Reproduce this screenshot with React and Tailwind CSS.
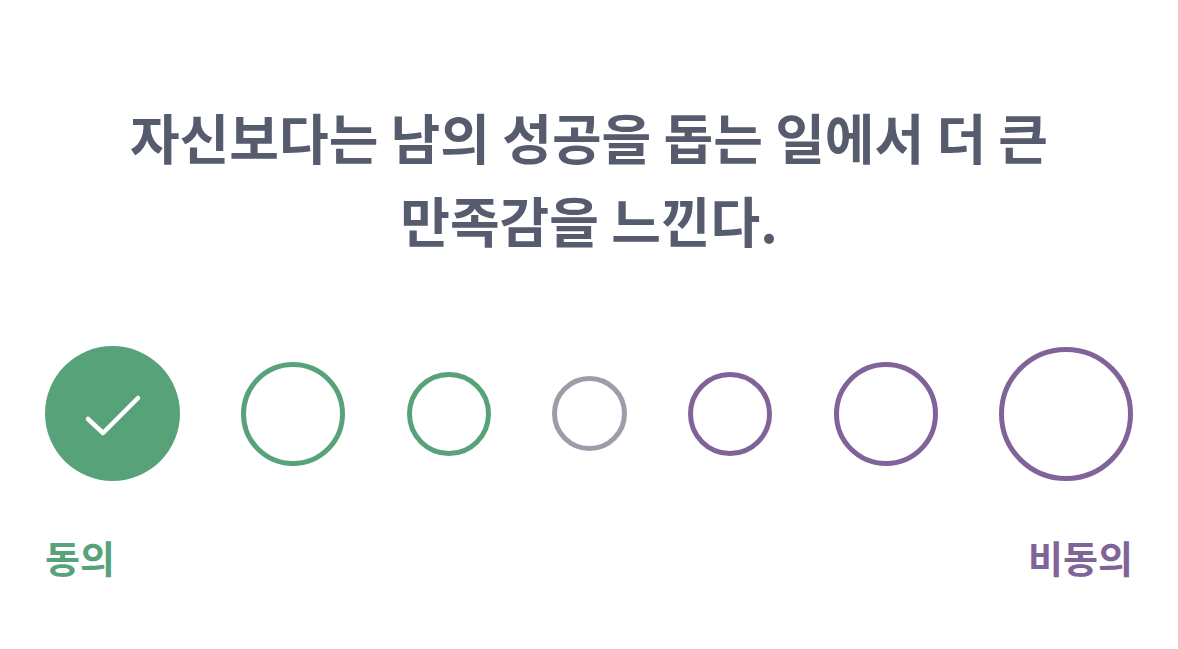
const options = [
  { size: "w-[135px] h-[135px]", cls: "bg-[#58a27a]", checked: true },
  { size: "w-[104px] h-[104px]", cls: "border-[5px] border-[#58a27a]" },
  { size: "w-[84px] h-[84px]", cls: "border-[5px] border-[#58a27a]" },
  { size: "w-[75px] h-[75px]", cls: "border-[5px] border-[#9d9ca8]" },
  { size: "w-[84px] h-[84px]", cls: "border-[5px] border-[#7f6399]" },
  { size: "w-[104px] h-[104px]", cls: "border-[5px] border-[#7f6399]" },
  { size: "w-[134px] h-[134px]", cls: "border-[5px] border-[#7f6399]" },
];

function Check() {
  return (
    <svg width="135" height="135" viewBox="0 0 135 135" fill="none">
      <path
        d="M43 73 L58 87 L93 52"
        stroke="white"
        strokeWidth="4.5"
        strokeLinecap="round"
        strokeLinejoin="round"
      />
    </svg>
  );
}

export default function App() {
  return (
    <div
      className="w-[1178px] h-[649px] bg-white flex flex-col items-center pt-[95px] px-[45px]"
      style={{ fontFamily: '"Noto Sans CJK KR", "Noto Sans", sans-serif' }}
    >
      <h1 className="text-center text-[54px] leading-[83px] font-bold text-[#565c6e] whitespace-nowrap">
        자신보다는 남의 성공을 돕는 일에서 더 큰
        <br />
        만족감을 느낀다.
      </h1>

      <div className="mt-[85px] w-full flex items-center justify-between h-[135px]">
        {options.map((o, i) => (
          <button
            key={i}
            type="button"
            className={`${o.size} ${o.cls} rounded-full shrink-0 flex items-center justify-center`}
          >
            {o.checked && <Check />}
          </button>
        ))}
      </div>

      <div className="mt-[50px] w-full flex justify-between text-[38px] leading-[52px] font-bold">
        <span className="text-[#58a27a]">동의</span>
        <span className="text-[#7f6399]">비동의</span>
      </div>
    </div>
  );
}
